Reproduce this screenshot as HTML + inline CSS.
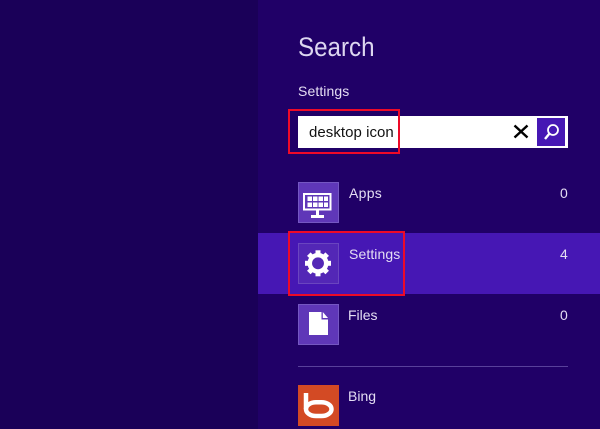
<!DOCTYPE html>
<html><head><meta charset="utf-8"><style>
html,body{margin:0;padding:0}
body{width:600px;height:429px;overflow:hidden;position:relative;background:#200067;font-family:"Liberation Sans",sans-serif;color:#e4ddf3}
div{position:absolute}
.t{white-space:nowrap;line-height:1}
.tile{left:298px;width:39px;height:39px;background:#5f37b8;border:1px solid #7557c2}
.red{border:2px solid #ee0a28;box-sizing:border-box}
</style></head><body>
<div style="left:0;top:0;width:258px;height:429px;background:#1a0058"></div>
<div style="left:258px;top:233px;width:342px;height:61px;background:#4617b4"></div>
<div class="t" style="left:298px;top:34px;font-size:27px;transform:scaleX(.895);transform-origin:left top;color:#ddd6f0">Search</div>
<div class="t" style="left:298px;top:84px;font-size:14px;letter-spacing:.1px">Settings</div>
<div style="left:298px;top:116px;width:270px;height:32px;background:#fff"></div>
<div class="t" style="left:309px;top:125px;font-size:15px;color:#111;letter-spacing:.05px">desktop icon</div>
<svg style="position:absolute;left:513px;top:124px" width="16" height="15"><path d="M1.500 1.500L14.500 13.500M14.500 1.500L1.500 13.500" stroke="#000" stroke-width="2.400" fill="none"/></svg>
<div style="left:537px;top:118px;width:28px;height:28px;background:#4617b4"></div>
<svg style="position:absolute;left:537px;top:118px" width="28" height="28"><circle cx="16" cy="12" r="5" stroke="#fff" stroke-width="1.800" fill="none"/><path d="M12.500 15.500L8 21" stroke="#fff" stroke-width="2.400"/></svg>

<div class="tile" style="top:182px"></div>
<svg style="position:absolute;left:298px;top:182px" width="41" height="41" fill="#fff"><path d="M5 11H33.500V28.500H5ZM7 13V26.500H31.500V13Z" fill-rule="evenodd"/><path d="M9.500 14.500h4.500v4.500h-4.500zM15 14.500h4.500v4.500H15zM20.500 14.500h4.500v4.500h-4.500zM26 14.500h4v4.500h-4zM9.500 20.500h4.500v4.500h-4.500zM15 20.500h4.500v4.500H15zM20.500 20.500h4.500v4.500h-4.500zM26 20.500h4v4.500h-4zM18 28.500h3V33h-3zM13 33h13v3H13z"/></svg>
<div class="t" style="left:349px;top:186px;font-size:14px;letter-spacing:.3px">Apps</div>
<div class="t" style="left:560px;top:186px;font-size:14px">0</div>

<div class="tile" style="top:243px;background:#5327b6;border-color:#6a45bf"></div>
<svg style="position:absolute;left:298px;top:243px" width="41" height="41"><circle cx="20" cy="20.300" r="8.200" stroke="#fff" stroke-width="4.500" fill="none"/><g fill="#fff" transform="translate(20 20.300)"><path d="M-2.500 -13H2.500V-8H-2.500Z"/><path d="M-2.500 -13H2.500V-8H-2.500Z" transform="rotate(45)"/><path d="M-2.500 -13H2.500V-8H-2.500Z" transform="rotate(90)"/><path d="M-2.500 -13H2.500V-8H-2.500Z" transform="rotate(135)"/><path d="M-2.500 -13H2.500V-8H-2.500Z" transform="rotate(180)"/><path d="M-2.500 -13H2.500V-8H-2.500Z" transform="rotate(225)"/><path d="M-2.500 -13H2.500V-8H-2.500Z" transform="rotate(270)"/><path d="M-2.500 -13H2.500V-8H-2.500Z" transform="rotate(315)"/></g></svg>
<div class="t" style="left:349px;top:247px;font-size:14px;letter-spacing:.1px">Settings</div>
<div class="t" style="left:560px;top:247px;font-size:14px">4</div>

<div class="tile" style="top:304px"></div>
<svg style="position:absolute;left:298px;top:304px" width="41" height="41"><path d="M11 8H23.500V15.500H30V31H11ZM24.800 8L30 14H24.800Z" fill="#fff"/></svg>
<div class="t" style="left:348px;top:308px;font-size:14px">Files</div>
<div class="t" style="left:560px;top:308px;font-size:14px">0</div>

<div style="left:298px;top:366px;width:270px;height:1px;background:#58409a"></div>

<div style="left:298px;top:385px;width:41px;height:41px;background:#d34a24"></div>
<svg style="position:absolute;left:298px;top:385px" width="41" height="41"><path d="M8 8V24" stroke="#fff" stroke-width="4.500" fill="none"/><rect x="8" y="17.200" width="25.500" height="13.800" rx="10" ry="6.900" stroke="#fff" stroke-width="4.500" fill="none"/></svg>
<div class="t" style="left:348px;top:389px;font-size:14px">Bing</div>

<div class="red" style="left:288px;top:109px;width:112px;height:45px"></div>
<div class="red" style="left:288px;top:231px;width:117px;height:65px"></div>
</body></html>
